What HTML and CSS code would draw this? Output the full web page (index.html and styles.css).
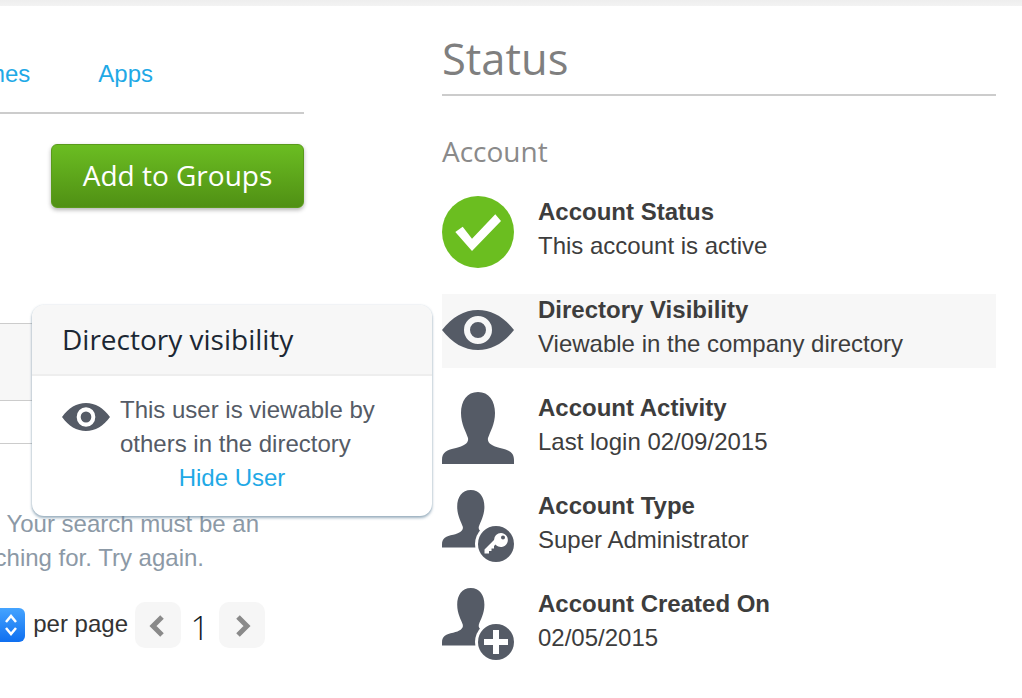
FILE: index.html
```html
<!DOCTYPE html>
<html lang="en">
<head>
<meta charset="utf-8">
<title>Status</title>
<link rel="stylesheet" href="styles.css">
</head>
<body>
<svg class="defs" width="0" height="0" aria-hidden="true">
  <defs>
    <path id="person" d="M36 0C47 0 53 9 53 21C53 32 48 40 46 46C45 51 50 54 58 56C67 58 72 60 72 68V72H0V68C0 60 5 58 14 56C22 54 27 51 26 46C24 40 19 32 19 21C19 9 25 0 36 0Z"/>
    <path id="eye" fill-rule="evenodd" d="M0 20C10 7 22 0 36 0C50 0 62 7 72 20C62 33 50 40 36 40C22 40 10 33 0 20ZM36 6A14 14 0 1 0 36 34A14 14 0 1 0 36 6ZM36 12A8 8 0 1 1 36 28A8 8 0 1 1 36 12Z"/>
  </defs>
</svg>
<div class="topbar"></div>
<main class="page">
  <section class="left">
    <nav class="tabs">
      <a class="tab" href="#">Themes</a>
      <a class="tab" href="#">Apps</a>
    </nav>
    <div class="actions"><button class="add-btn">Add to Groups</button></div>
    <div class="table">
      <div class="table-head"></div>
      <div class="table-row"></div>
    </div>
    <p class="message">
      <span class="msg-one">Your search must be an</span>
      <span class="msg-two">exact match of what you are searching for. Try again.</span>
    </p>
    <div class="pager">
      <span class="select">
        <svg width="26" height="34" viewBox="0 0 26 34"><path class="sel-arrow" d="M7 14L12 8L17 14M7 20L12 26L17 20"/></svg>
      </span>
      <span class="per-page">per page</span>
      <button class="page-btn" aria-label="Previous"><svg width="46" height="46" viewBox="0 0 46 46"><path class="chev" d="M27 15L18 24L27 33"/></svg></button>
      <span class="page-num">1</span>
      <button class="page-btn" aria-label="Next"><svg width="46" height="46" viewBox="0 0 46 46"><path class="chev" d="M19 15L28 24L19 33"/></svg></button>
    </div>
  </section>

  <section class="status">
    <h1 class="status-title">Status</h1>
    <h2 class="status-sub">Account</h2>
    <div class="rows">
      <div class="row">
        <svg class="icon" viewBox="0 0 72 72"><circle cx="36" cy="36" r="36" fill="#6bbe20"/><path fill="#fff" d="M13.3 36L20.7 30.7L30 42.7L53.3 18.3L59 25L30 55Z"/></svg>
        <div class="row-text"><strong>Account Status</strong><span>This account is active</span></div>
      </div>
      <div class="row row-active">
        <svg class="icon" viewBox="0 0 72 72"><use href="#eye" y="16" class="dark"/></svg>
        <div class="row-text"><strong>Directory Visibility</strong><span>Viewable in the company directory</span></div>
      </div>
      <div class="row">
        <svg class="icon" viewBox="0 0 72 72"><use href="#person" class="dark"/></svg>
        <div class="row-text"><strong>Account Activity</strong><span>Last login 02/09/2015</span></div>
      </div>
      <div class="row">
        <svg class="icon" viewBox="0 0 72 72">
          <use href="#person" class="dark" transform="scale(.8)"/>
          <circle cx="54" cy="54" r="21" fill="#fff"/>
          <circle cx="54" cy="54" r="18" class="dark"/>
          <path fill="#fff" fill-rule="evenodd" d="M59 43A7 7 0 1 1 53.5 54.500L52 56V58.500H49.500V61H47V63.500H42.500V59.500L52 50A7 7 0 0 1 59 43ZM61 45.500A2 2 0 1 0 61 49.500A2 2 0 1 0 61 45.500Z"/>
        </svg>
        <div class="row-text"><strong>Account Type</strong><span>Super Administrator</span></div>
      </div>
      <div class="row">
        <svg class="icon" viewBox="0 0 72 72">
          <use href="#person" class="dark" transform="scale(.8)"/>
          <circle cx="54" cy="54" r="21" fill="#fff"/>
          <circle cx="54" cy="54" r="18" class="dark"/>
          <path fill="#fff" d="M51 42H57V51H66V57H57V66H51V57H42V51H51Z"/>
        </svg>
        <div class="row-text"><strong>Account Created On</strong><span>02/05/2015</span></div>
      </div>
    </div>
  </section>

  <aside class="popover">
    <h3 class="pop-head">Directory visibility</h3>
    <div class="pop-body">
      <div class="pop-info">
        <svg class="pop-eye" width="48" height="28" viewBox="0 0 72 40" preserveAspectRatio="none"><use href="#eye" class="dark"/></svg>
        <p class="pop-text">This user is viewable by others in the directory</p>
      </div>
      <a class="pop-link" href="#">Hide User</a>
    </div>
  </aside>
</main>
</body>
</html>
```
FILE: styles.css
```css
* { box-sizing: border-box; }
html, body { margin: 0; height: 100%; overflow: hidden; background: #fff; }
body { font-family: "Liberation Sans", Arial, sans-serif; color: #3d3d3d; font-size: 24px; }
.defs { position: absolute; }
.dark { fill: #555b66; }
.topbar { height: 6px; background: linear-gradient(#eeeeee, #f3f3f3); }
.page { position: relative; display: flex; height: 692px; overflow: hidden; }

.left { flex: 0 0 304px; width: 304px; margin-right: 138px; }
.tabs { display: flex; justify-content: flex-end; gap: 68px; height: 108px; padding: 52px 151px 0 0; border-bottom: 2px solid #cccccc; white-space: nowrap; }
.tab { flex: none; color: #1fa9e6; text-decoration: none; line-height: 32px; }
.actions { display: flex; justify-content: flex-end; margin-top: 30px; }
.add-btn { width: 253px; height: 64px; padding: 0 0 2px; border: 1px solid #5a9a1c; border-radius: 6px; background: linear-gradient(#6bbd22, #509014); color: #fff; font: 28px/1 "Open Sans", sans-serif; box-shadow: 0 2px 4px rgba(0,0,0,.3); }
.table { margin-top: 115px; }
.table-head { height: 78px; background: #f7f7f7; border-top: 1px solid #cccccc; border-bottom: 1px solid #cccccc; }
.table-row { height: 43px; border-bottom: 1px solid #cccccc; }
.message { display: flex; flex-direction: column; align-items: flex-end; margin: 63px 0 0; color: #8c99a6; line-height: 34px; white-space: nowrap; }
.msg-one { margin-right: 45px; }
.msg-two { margin-right: 100px; }
.pager { display: flex; align-items: center; justify-content: flex-end; margin-top: 27px; padding-right: 39px; height: 46px; white-space: nowrap; }
.pager > * { flex: none; }
.select { display: block; width: 26px; height: 34px; margin-right: 8px; border-radius: 0 6px 6px 0; background: linear-gradient(#45a4ff, #0f6ff0); }
.select svg { display: block; }
.sel-arrow { fill: none; stroke: #fff; stroke-width: 2.5; }
.per-page { color: #333; margin-right: 7px; line-height: 34px; position: relative; top: -1px; }
.page-btn { width: 46px; height: 46px; padding: 0; border: 0; border-radius: 10px; background: #f6f6f6; }
.page-btn svg { display: block; }
.chev { fill: none; stroke: #8a8a8a; stroke-width: 5; }
.page-num { width: 38px; text-align: center; font: 300 33px/46px "Open Sans", sans-serif; color: #0f1a26; padding-top: 6px; }

.status { flex: 0 0 554px; width: 554px; }
.status-title { margin: 0; height: 90px; padding-top: 25px; border-bottom: 2px solid #cccccc; font: 400 43.5px/56px "Open Sans", sans-serif; color: #7f7f7f; }
.status-sub { margin: 35px 0 0; font: 400 28px/40px "Open Sans", sans-serif; color: #8a8a8a; }
.rows { display: flex; flex-direction: column; gap: 24px; margin-top: 25px; }
.row { display: flex; height: 74px; gap: 24px; align-items: center; }
.row-active { background: #f7f7f7; }
.icon { flex: 0 0 72px; width: 72px; height: 72px; margin-top: -2px; }
.row-text { display: flex; flex-direction: column; line-height: 34px; padding-bottom: 8px; }
.row-text strong { font-weight: 700; }

.popover { position: absolute; left: 32px; top: 299px; width: 400px; height: 211px; border-radius: 12px; background: #fff; box-shadow: 0 2px 3px rgba(90,125,150,.6), 0 0 2px rgba(90,125,150,.25); overflow: hidden; }
.pop-head { margin: 0; height: 71px; padding: 14px 30px 0; background: #f7f7f7; border-bottom: 2px solid #eeeeee; font: 400 28px/40px "Open Sans", sans-serif; color: #1c2733; }
.pop-body { padding: 17px 0 0; text-align: center; color: #555b66; line-height: 34px; }
.pop-info { display: flex; gap: 10px; padding-left: 30px; text-align: left; }
.pop-eye { flex: 0 0 48px; margin-top: 10px; }
.pop-text { margin: 0; width: 260px; }
.pop-link { color: #1fa9e6; text-decoration: none; display: block; }
```
